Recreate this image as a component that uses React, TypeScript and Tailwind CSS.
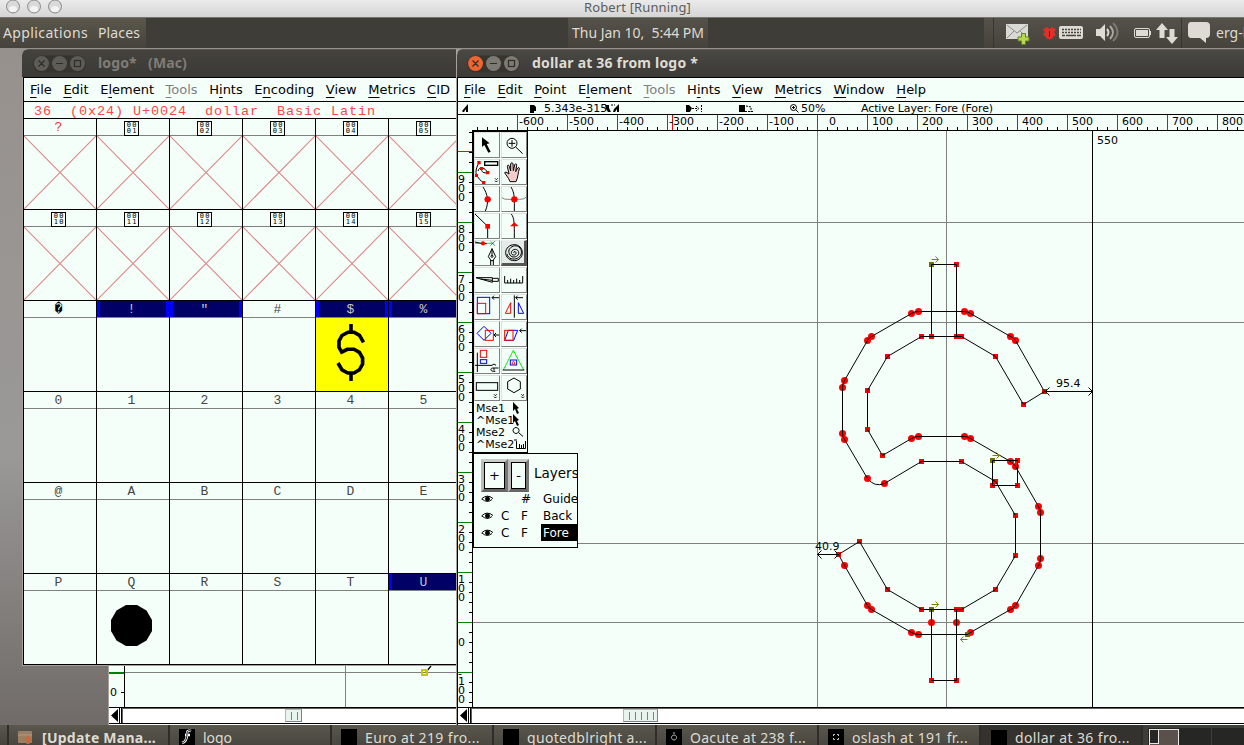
import { useLayoutEffect, useRef, type ReactNode } from "react";

/* Text whose tracking is computed so that it fills the width of its box. */
function Fit({ text, className }: { text: string; className: string }) {
  const box = useRef<HTMLSpanElement>(null);
  const inner = useRef<HTMLSpanElement>(null);
  useLayoutEffect(() => {
    if (!box.current || !inner.current) return;
    inner.current.style.letterSpacing = "0px";
    const free = box.current.clientWidth - inner.current.getBoundingClientRect().width;
    inner.current.style.letterSpacing = `${free / text.length}px`;
  }, [text]);
  return (
    <span ref={box} className={`block shrink-0 whitespace-pre ${className}`}>
      <span ref={inner}>{text}</span>
    </span>
  );
}

const UI = "font-['Noto_Sans','Open_Sans',sans-serif]";

function MenuBar({ items }: { items: [string, number][] }) {
  return (
    <div className="flex h-[25px] shrink-0 items-center gap-[11.600px] border-y border-black pb-px pl-[6px] text-[13px] text-black">
      {items.map(([t, u]) => (
        <span key={t} className={`shrink-0 leading-none ${t === "Tools" ? "text-[#808080]" : ""}`}>
          {t.slice(0, u)}
          <span className="underline decoration-1 underline-offset-[3px]">{t[u]}</span>
          {t.slice(u + 1)}
        </span>
      ))}
    </div>
  );
}

function TitleButtons({ active }: { active: boolean }) {
  return (
    <svg width="54" height="20" viewBox="0 0 54 20" className="shrink-0">
      <rect x="0" y="1.500" width="53" height="17" rx="8.500" fill="#35342f" />
      <circle cx="8.500" cy="9.500" r="7.500" fill={active ? "#ee6532" : "#5e5c57"} />
      <circle cx="26.500" cy="9.500" r="7.500" fill={active ? "#7d7a73" : "#5e5c57"} />
      <circle cx="44.500" cy="9.500" r="7.500" fill={active ? "#7d7a73" : "#5e5c57"} />
      <g stroke="#2d2c28" strokeWidth="1.200" fill="none">
        <path d="M5.500 6.500l6 6M11.500 6.500l-6 6M23 9.500h7" />
        <rect x="41.500" y="6.500" width="6" height="6" />
      </g>
    </svg>
  );
}

/* ---------- font window ---------- */

const selected = new Set(["!", '"', "$", "%", "U"]);
const rows: string[][] = [
  ["?", "0001", "0002", "0003", "0004", "0005"],
  ["0010", "0011", "0012", "0013", "0014", "0015"],
  ["\uFFFD", "!", '"', "#", "$", "%"],
  ["0", "1", "2", "3", "4", "5"],
  ["@", "A", "B", "C", "D", "E"],
  ["P", "Q", "R", "S", "T", "U"],
];

function HexBox({ code }: { code: string }) {
  return (
    <span className="mt-px grid h-[15px] w-[15px] grid-cols-2 grid-rows-2 border border-black px-px text-center font-['DejaVu_Sans_Mono',monospace] text-[7px] leading-[6px] text-black">
      {code.split("").map((c, i) => (
        <span key={i}>{c}</span>
      ))}
    </span>
  );
}

function Cell({ label, crossed }: { label: string; crossed: boolean }) {
  const sel = selected.has(label);
  return (
    <div className="flex h-[91px] w-[73px] shrink-0 flex-col border-r border-b border-black">
      <div
        className={`flex h-[17px] shrink-0 items-center justify-center border-b border-[#808080] pt-px pr-[3px] font-['Liberation_Mono',monospace] text-[13px] leading-none ${
          sel
            ? "bg-[#000066] text-[#c8c8c0] shadow-[inset_3px_0_#0000ff,inset_-3px_0_#0000ff]"
            : label === "?"
              ? "text-[#ff3030]"
              : label === "\uFFFD"
                ? "text-black"
                : "text-[#444]"
        }`}
      >
        {label.length === 4 ? <HexBox code={label} /> : label}
      </div>
      <div className={`h-[73px] ${label === "$" ? "bg-[#ffff00]" : ""}`}>
        {crossed && (
          <svg width="72" height="73" viewBox="0 0 72 73" className="block" stroke="#dc8886" strokeWidth="1.100">
            <path d="M0 0L72 73M72 0L0 73" />
          </svg>
        )}
        {label === "$" && (
          <svg width="72" height="73" viewBox="316 318 72 73" className="block" fill="none" stroke="#000" strokeWidth="3.600">
            <path d="M351 324V333M351 373V381" />
            <path d="M363.500 342.400L359.500 335.400L354 332.200H348L342 335.500L339 341V347.300L341.700 352.200L347.300 349.300H354L359.400 352.400L362.600 358V364L359.400 369.800L354 373H347.700L342 369.800L338 363" />
          </svg>
        )}
        {label === "Q" && (
          <svg width="72" height="73" viewBox="97 591 72 73" className="block">
            <path d="M126 605h11l9.500 5.500 5.500 9.500v11l-5.500 9.500-9.500 5.500h-11l-9.500-5.500-5.500-9.500v-11l5.500-9.500z" />
          </svg>
        )}
      </div>
    </div>
  );
}

function FontWindow() {
  return (
    <section className="absolute top-[1px] left-[22px] flex h-[617px] w-[435px] flex-col overflow-hidden rounded-tl-[6px] border-r border-b border-[#a8a09b] bg-[#f5fffa]">
      <header className="flex h-[28px] shrink-0 items-center border-t border-[#55534d] bg-linear-to-b from-[#44423d] to-[#3b3a36] pl-[11px]">
        <TitleButtons active={false} />
        <Fit text="logo*   (Mac)" className={`ml-[11px] w-[89px] pb-[2px] text-[14px] font-bold text-[#807d77] ${UI}`} />
      </header>
      <div className="flex grow border-l border-[#a8a09b]">
        <div className="flex w-[440px] shrink-0 flex-col border-l border-black">
          <MenuBar
            items={[["File", 0], ["Edit", 0], ["Element", 1], ["Tools", 0], ["Hints", 1], ["Encoding", 1], ["View", 0], ["Metrics", 0], ["CID", 0]]}
          />
          <div className="flex h-[17px] shrink-0 items-center border-b border-black pt-[3px] pl-[10px]">
            <Fit
              text="36  (0x24) U+0024  dollar  Basic Latin"
              className="w-[342px] font-['Liberation_Mono',monospace] text-[13.500px] leading-none text-[#ff4545]"
            />
          </div>
          <div className="flex shrink-0 flex-col">
            {rows.map((r, i) => (
              <div key={i} className="flex">
                {r.map((c) => (
                  <Cell key={c} label={c} crossed={i < 2} />
                ))}
              </div>
            ))}
          </div>
        </div>
      </div>
    </section>
  );
}

/* ---------- scroll bars ---------- */

function ScrollBar({ before, grips }: { before: string; grips: number }) {
  return (
    <div className="flex h-[17px] shrink-0 border-y border-black bg-white">
      <svg width="13" height="15" viewBox="0 0 13 15" className="shrink-0">
        <path d="M9 1v13L2 7.500z" />
        <path d="M10.500 0v15M12.500 0v15" stroke="#000" />
      </svg>
      <div className="flex grow border-t border-l border-[#606060]">
        <div className={before} />
        <div className="flex h-[13px] shrink-0 items-center gap-[5px] border border-[#b0b8b4] border-r-[#808080] border-b-[#808080] bg-[#eaf4ef] pr-[3px] pl-[5px]">
          {Array.from({ length: grips }, (_, i) => (
            <span key={i} className="h-[8px] w-px bg-[#808080]" />
          ))}
        </div>
      </div>
    </div>
  );
}

function BackWindow() {
  return (
    <section className="absolute top-[618px] left-[108px] flex h-[59px] w-[348px] flex-col overflow-hidden border-l border-[#a8a09b] bg-[#f5fffa]">
      <svg width="347" height="41" viewBox="109 666 347 41" className="shrink-0" fill="none">
        <path d="M345.500 666V707M124 672.500H456" stroke="#808080" />
        <path d="M124.500 666V707M121 692.500H124" stroke="#000" />
        <path d="M109 672.500H124" stroke="#008000" />
        <path d="M109 673.500H124" stroke="#ff0000" />
        <path d="M426 672L431 666" stroke="#000" strokeWidth="1.300" />
        <rect x="422" y="670" width="5" height="5" stroke="#c8c800" strokeWidth="2" />
        <text x="110" y="696" fill="#000" className="font-['DejaVu_Sans',sans-serif] text-[11px]">0</text>
      </svg>
      <ScrollBar before="w-[162px] shrink-0" grips={2} />
    </section>
  );
}

/* ---------- tool palette ---------- */

const chev = (x: number, y: number) => `M${x - 4} ${y}l4 4 4-4M${x - 4} ${y + 7}l4 4 4-4`;

const tools: ReactNode[] = [
  <path d="M24 16V45L31 39 43 62 50 59 38 36 47 34z" fill="#000" stroke="none" />,
  <>
    <circle cx="33" cy="34" r="15" />
    <path d="M33 24v20M23 34h20M44 45L65 65" />
  </>,
  <>
    <path d="M15 11C4 30 4 45 10 52S18 66 29 70M12 36C16 20 34 26 41 41 30 44 20 38 23 28" />
    <rect x="32" y="8" width="39" height="11" strokeWidth="4" />
    <path d={chev(67, 58)} />
    <g fill="#f00" stroke="none">
      <path d="M10 6h10v10h-10zM18 24h9v9h-9zM36 36h10v10h-10zM3 45h9v9h-9zM24 66h10v9h-10z" />
    </g>
  </>,
  <path
    d="M27 68C22 54 14 48 11 41l4-2 9 6-5-23c0-5 5-5 6 0l4 14 0-21c1-5 6-5 7 0l1 20 4-18c2-4 7-3 6 2l-3 19 6-11c3-3 6-1 5 3-4 9-3 24-10 38z"
    fill="#f4cccc"
  />,
  <>
    <path d="M27 3C42 25 45 50 34 75" />
    <circle cx="41" cy="40" r="9.500" fill="#f00" stroke="none" />
  </>,
  <>
    <path d="M2 34Q8 41 20 40H56Q70 40 75 34" stroke="#808080" />
    <path d="M30 3C42 22 40 40 40 75" />
    <circle cx="40" cy="40" r="9.500" fill="#f00" stroke="none" />
  </>,
  <>
    <path d="M3 3L41 40V76" />
    <rect x="34" y="33" width="14" height="14" fill="#f00" stroke="none" />
  </>,
  <>
    <path d="M31 3C40 15 40 30 40 75" />
    <path d="M40 28L53 40H27z" fill="#f00" stroke="none" />
  </>,
  <>
    <path d="M3 10H58" stroke="#0f0" />
    <path d="M3 6Q15 10 38 11" />
    <circle cx="27" cy="10" r="6.500" fill="#f00" stroke="none" />
    <path d="M49 3l14 14M63 3L49 17" stroke="#22f" strokeWidth="2" />
    <path d="M54 26L43 50 50 60V76M54 26L65 50 58 60V76M50 62h8M54 26v20" />
    <circle cx="54" cy="49" r="3" />
  </>,
  <>
    <path d="M39 39c-3-6 7-6 6 1s-14 7-14-2 16-15 21-4-7 18-16 17-17-16-10-25 22-13 31-2 3 26-8 31-28 2-31-13" />
    <path d="M40 14c14 0 24 11 24 24S54 62 40 62 14 52 14 38 26 14 40 14z" />
  </>,
  <path d="M6 32H55V46L6 32M20 36L55 40M55 34H73V43H55" />,
  <path d="M11 27V48H65V27M20 48V39M29 48V35M38 48V39M47 48V35M56 48V39" />,
  <>
    <rect x="10" y="10" width="37" height="49" stroke="#00f" />
    <rect x="10" y="28" width="25" height="31" stroke="#f00" />
    <path d="M77 11H54M60 5L54 11 60 17" />
  </>,
  <>
    <path d="M40 4V71M66 11H44M50 5L44 11 50 17" />
    <path d="M29 26V58H13z" stroke="#f00" />
    <path d="M52 26V58H68z" stroke="#00f" />
  </>,
  <>
    <path d="M30 16L51 37 30 58 9 37z" stroke="#00f" />
    <rect x="34" y="28" width="24" height="30" stroke="#f00" />
    <path d="M77 42H60M66 36L60 42 66 48" />
  </>,
  <>
    <path d="M22 28H50L38 58H11z" stroke="#00f" />
    <rect x="11" y="28" width="25" height="30" stroke="#f00" />
    <path d="M77 29H56M62 23L56 29 62 35" />
  </>,
  <>
    <path d="M10 14V72M3 52H54Q60 44 66 52M64 70C50 72 46 62 56 60H74M60 60V68" />
    <rect x="19" y="7" width="19" height="21" stroke="#f00" />
    <rect x="19" y="35" width="19" height="11" stroke="#00f" />
  </>,
  <>
    <path d="M37 7L68 66M37 7L7 66" stroke="#0e0" />
    <path d="M5 66H70" />
    <rect x="28" y="36" width="19" height="15" stroke="#00f" />
    <path d="M34 50V43L37 40 41 43V50" stroke="#f00" />
  </>,
  <>
    <rect x="7" y="23" width="64" height="23" />
    <path d={chev(64, 58)} />
  </>,
  <>
    <path d="M39 9L58 20V42L39 53 20 42V20z" />
    <path d={chev(65, 58)} />
  </>,
];

const mouse: [string, ReactNode][] = [
  ["Mse1", <path d="M1 0V9L3 7 5 12 7 11 5 7 7 6z" fill="#000" stroke="none" />],
  ["^Mse1", <path d="M1 0V9L3 7 5 12 7 11 5 7 7 6z" fill="#000" stroke="none" />],
  ["Mse2", <path d="M4 1.500a3 3 0 1 0 .1 0M6.500 6.500L11 10.500" />],
  ["^Mse2", <path d="M2 2h3M4.500 3V10.500H13.500V3M7.500 10V6M9.500 10V7M11.500 10V6" />],
];

function Palette() {
  return (
    <div className="absolute top-0 left-0 flex h-[323px] w-[55px] flex-col border-t-2 border-r border-b border-l border-black bg-[#f5fffa] text-black">
      <div className="grid grid-cols-2 gap-px">
        {tools.map((t, i) => (
          <svg
            key={i}
            width="26"
            height="26"
            viewBox={i === 9 ? "3 3 66 66" : "3 3 72 72"}
            fill="none"
            stroke="#000"
            strokeWidth="3"
            className={
              i === 9
                ? "border-t border-r-3 border-b-3 border-l border-t-[#eee] border-r-[#555] border-b-[#555] border-l-[#ccc] bg-[#e4ebe8]"
                : "border border-t-[#e0e0e0] border-r-[#808080] border-b-[#808080] border-l-[#e0e0e0]"
            }
          >
            {t}
          </svg>
        ))}
      </div>
      <div className="flex flex-col pt-px pl-[2px]">
        {mouse.map(([t, icon]) => (
          <div key={t} className="flex h-[12px] items-center">
            <span className="w-[36px] shrink-0 text-[11px] leading-none whitespace-nowrap">{t}</span>
            <svg width="14" height="12" viewBox="0 0 14 12" fill="none" stroke="#000" className="shrink-0">
              {icon}
            </svg>
          </div>
        ))}
      </div>
    </div>
  );
}

function Eye() {
  return (
    <svg width="13" height="9" viewBox="0 0 13 9" className="shrink-0" fill="none" stroke="#000">
      <path d="M.5 5Q6 -.5 12 4.500M1 5Q6 9.500 11 5.500" />
      <circle cx="6.500" cy="4.800" r="2" fill="#000" />
    </svg>
  );
}

const KEY =
  "flex h-[33px] shrink-0 items-center justify-center border-4 border-t-[#ccc] border-r-[#777] border-b-[#666] border-l-[#bbb] text-[13px] outline-1 -outline-offset-4 outline-black";

function Layers() {
  return (
    <div className="absolute top-[323px] left-0 flex h-[95px] w-[105px] flex-col overflow-hidden border border-black bg-[#f5fffa] text-black">
      <div className="flex h-[36px] shrink-0 items-start pt-[5px] pl-[7px]">
        <div className={`w-[27px] ${KEY}`}>+</div>
        <div className={`w-[21px] ${KEY}`}>-</div>
        <span className="ml-[5px] pt-[8px] text-[13.500px] leading-none">Layers</span>
      </div>
      {[
        ["", "#", "Guide"],
        ["C", "F", "Back"],
        ["C", "F", "Fore"],
      ].map(([c, f, n]) => (
        <div key={n} className="flex h-[17px] shrink-0 items-center pl-[7px] text-[12px] leading-none">
          <Eye />
          <span className="ml-[7px] w-[20px] shrink-0">{c}</span>
          <span className="w-[20px] shrink-0">{f}</span>
          <span className={`flex h-[17px] w-[40px] shrink-0 items-center pl-[2px] ${n === "Fore" ? "bg-black text-white" : ""}`}>{n}</span>
        </div>
      ))}
    </div>
  );
}

/* ---------- glyph canvas ---------- */

const squares: [number, number][] = [
  [956, 264], [1044, 391], [1023, 404], [995, 356], [961, 336], [956, 336], [931, 336], [921, 336], [887, 356], [867, 390],
  [867, 429], [882, 455], [838, 554], [859, 541], [887, 589], [921, 609], [956, 609], [961, 609], [995, 589], [1015, 555],
  [1015, 515], [995, 481], [961, 461], [921, 461], [956, 680], [931, 680], [1017, 460], [1017, 485], [992, 485],
];
const dots: [number, number][] = [
  [911, 313], [918, 311], [964, 311], [970, 313], [1010, 336], [1015, 340], [911, 438], [918, 436], [964, 436], [970, 438],
  [1010, 461], [1015, 466], [1038, 506], [1040, 512], [1040, 558], [1038, 565], [1015, 605], [1010, 609], [970, 632],
  [918, 634], [911, 632], [871, 609], [867, 605], [844, 565], [884, 483], [867, 478], [844, 439], [842, 433], [842, 387],
  [844, 380], [867, 340], [871, 336], [931, 622], [956, 622],
];
const starts: [number, number][] = [[931, 264], [931, 609], [992, 460], [967, 634]];

function Canvas() {
  return (
    <svg width="771" height="576" viewBox="473 131 771 576" className="block" fill="none">
      <path d="M473 222.500H1244M473 322.500H1244M473 543.500H1244M473 622.500H1244M817.500 131V707M946.500 131V707" stroke="#808080" />
      <path d="M1092.500 131V707" stroke="#000" />
      <g transform="translate(.5 .5)">
        {dots.map(([x, y], i) => (
          <circle key={i} cx={x} cy={y} r="3.500" fill="#f00" />
        ))}
        {squares.map(([x, y], i) => (
          <rect key={i} x={x - 2.5} y={y - 2.5} width="5" height="5" fill="#f00" />
        ))}
        {starts.map(([x, y], i) => (
          <rect key={i} x={x - 2.5} y={y - 2.5} width="5" height="5" fill="#707000" />
        ))}
        <path
          stroke="#000"
          d="M911 313Q914 311 918 311H964Q967 311 970 313L1010 336Q1013 337 1015 340L1044 391 1023 404 995 356 961 336H921L887 356 867 390V429L882 455 911 438Q914 436 918 436H964Q967 436 970 438L1010 461Q1013 463 1015 466L1038 506Q1040 509 1040 512V558Q1040 562 1038 565L1015 605Q1013 608 1010 609L970 632 967 634H918Q914 634 911 632L871 609Q869 608 867 605L844 565 838 554 859 541 887 589 921 609H961L995 589 1015 555V515L995 481 961 461H921L884 483Q874 487 867 478L844 439Q842 436 842 433V387Q842 383 844 380L867 340Q869 337 871 336z"
        />
        <path stroke="#000" d="M931 264H956V336H931zM931 609H956V680H931zM992 460H1017V485H992z" />
        <path stroke="#808000" d="M931 259H938M935 256l3 3-3 3M992 455H999M996 452l3 3-3 3M931 604H938M935 601l3 3-3 3M967 639H960M963 636l-3 3 3 3" />
        <path stroke="#000" d="M1044 391H1092M1049 387l-4 4 4 4M1088 387l4 4-4 4M817 554H838M821 550l-4 4 4 4M834 550l4 4-4 4" />
      </g>
      <g fill="#000" className="font-['DejaVu_Sans',sans-serif] text-[11px]">
        <text x="1097" y="144">550</text>
        <text x="1056" y="387">95.4</text>
        <text x="815" y="550">40.9</text>
      </g>
    </svg>
  );
}

const range = (a: number, b: number, s: number) => Array.from({ length: Math.floor((b - a) / s) + 1 }, (_, i) => a + i * s);

function TopRuler() {
  return (
    <svg width="786" height="16" viewBox="458 115 786 16" className="block shrink-0" fill="none">
      <path stroke="#000" d={range(477, 1240, 10).map((x) => `M${x + 0.5} 127V130`).join("") + "M472 130.500H1244"} />
      <path stroke="#008000" d={range(517, 1240, 50).map((x) => `M${x + 0.5} 115V130`).join("")} />
      <path stroke="#f00" d="M672.500 115V130" />
      <g fill="#000" className="font-['DejaVu_Sans',sans-serif] text-[11px]">
        {range(-600, 800, 100).map((v) => (
          <text key={v} x={817 + v / 2 + (v < 0 ? 2 : v === 0 ? 12 : 5)} y="125">{v}</text>
        ))}
      </g>
    </svg>
  );
}

function SideRuler() {
  return (
    <svg width="15" height="576" viewBox="458 131 15 576" className="block shrink-0" fill="none">
      <path stroke="#000" d={range(132, 702, 10).map((y) => `M469 ${y + 0.5}H472`).join("") + "M472.500 131V707"} />
      <path stroke="#008000" d={range(172, 672, 50).map((y) => `M458 ${y + 0.5}H472`).join("")} />
      <path stroke="#f00" d="M458 151.500H472" />
      <g fill="#000" className="font-['DejaVu_Sans',sans-serif] text-[11px]">
        {range(100, 900, 100).map((v) =>
          String(v).split("").map((c, i) => (
            <text key={`${v}${i}`} x="458" y={622 - v / 2 + 11 + i * 9}>{c}</text>
          )),
        )}
        <text x="458" y="646">0</text>
        <text x="458" y="677">-</text>
        <text x="458" y="685">1</text>
        <text x="458" y="694">0</text>
        <text x="458" y="703">0</text>
      </g>
    </svg>
  );
}

function InfoBar() {
  return (
    <div className="flex h-[13px] shrink-0 items-center border-b border-black text-[11px] leading-none whitespace-nowrap text-black">
      <svg width="86" height="12" viewBox="458 102 86 12" className="shrink-0">
        <path d="M468 104v8h-2v-3l-2 3h-1l-1-1zM530 105h4l2 2v4h-2v2h-4z" />
      </svg>
      <span className="w-[60px] shrink-0">5.343e-315</span>
      <svg width="196" height="12" viewBox="604 102 196 12" className="shrink-0" fill="none" stroke="#000">
        <path d="M605 105h4v3l2 4h-3l-2-3zM619 104v8h-2v-3l-2 3h-2l1-3zM686 105h3l3 3-2 4h-4zM739 105h6v7h-6z" fill="#000" stroke="none" />
        <path d="M611 105l4 0M692 108.500h6M696 106l3 2.500-3 2.500M701.500 105v7M746 106l5 1v5M745 111.500h8" strokeDasharray="2 1" />
        <circle cx="793.500" cy="107.500" r="3" />
        <path d="M792 107.500h3M793.500 106v3M796 110l2.500 2.500" />
      </svg>
      <span className="w-[61px] shrink-0 pl-px">50%</span>
      <Fit text="Active Layer: Fore (Fore)" className="w-[132px]" />
    </div>
  );
}

function GlyphWindow() {
  return (
    <section className="absolute top-[1px] left-[456px] flex h-[676px] w-[788px] flex-col overflow-hidden rounded-tl-[6px] border-l border-[#a8a09b] bg-[#f5fffa]">
      <header className="flex h-[28px] shrink-0 items-center border-t border-[#5b5952] bg-linear-to-b from-[#4a4843] to-[#3b3a36] pl-[10px]">
        <TitleButtons active />
        <Fit text="dollar at 36 from logo *" className={`ml-[11px] w-[166px] pb-[2px] text-[14px] font-bold text-[#dfdbd2] ${UI}`} />
      </header>
      <div className="flex grow flex-col border-l border-black">
        <MenuBar
          items={[["File", 0], ["Edit", 0], ["Point", 0], ["Element", 1], ["Tools", 0], ["Hints", 1], ["View", 0], ["Metrics", 0], ["Window", 0], ["Help", 0]]}
        />
        <InfoBar />
        <TopRuler />
        <div className="flex">
          <SideRuler />
          <div className="relative">
            <Canvas />
            <div className="absolute -top-px left-0">
              <Palette />
              <Layers />
            </div>
          </div>
        </div>
        <ScrollBar before="w-[151px] shrink-0" grips={5} />
      </div>
    </section>
  );
}

/* ---------- desktop bars ---------- */

function HostTitle() {
  return (
    <div className="flex h-[18px] shrink-0 items-start border-b border-[#77756f] bg-linear-to-b from-[#ebebeb] to-[#d5d5d5]">
      <svg width="584" height="17" viewBox="0 0 584 17" className="shrink-0">
        {[13, 34, 55].map((x) => (
          <g key={x}>
            <circle cx={x} cy="6.500" r="6.500" fill="#d9d9d9" stroke="#8b8b8b" />
            <ellipse cx={x} cy="9" rx="4" ry="3" fill="#f4f4f4" />
          </g>
        ))}
      </svg>
      <Fit text="Robert [Running]" className={`w-[107px] text-[13px] leading-[15px] text-[#5c5c5c] ${UI}`} />
    </div>
  );
}

function TopPanel() {
  return (
    <div className={`flex h-[30px] shrink-0 items-center bg-[#3f3d37] text-[14px] text-[#dfdbd2] ${UI}`}>
      <div className="flex h-full w-[146px] shrink-0 items-center bg-linear-to-b from-[#5b574c] to-[#45433c] pb-[2px] pl-[3px]">
        <Fit text="Applications" className="w-[85px]" />
        <Fit text="Places" className="ml-[10px] w-[42px]" />
      </div>
      <div className="ml-[422px] flex h-full w-[140px] shrink-0 items-center bg-linear-to-b from-[#55524a] to-[#45433c] pb-[2px] pl-[4px]">
        <Fit text="Thu Jan 10,  5:44 PM" className="w-[132px]" />
      </div>
      <div className="ml-[276px] flex h-full w-[260px] shrink-0 items-center overflow-hidden bg-linear-to-b from-[#55524a] to-[#45433c]">
        <svg width="232" height="30" viewBox="984 18 232 30" className="shrink-0" fill="none">
          <path d="M993.500 18V48M1181.500 18V48" stroke="#38362f" />
          <rect x="1006" y="24" width="22" height="15" fill="#d9d9d6" />
          <path d="M1007 25l10 8 10-8M1007 38l7-7M1027 38l-7-7" stroke="#8c8c8a" />
          <path d="M1021.500 33.500h4v3.500h3.500v4h-3.500v3.500h-4v-3.500h-3.500v-4h3.500z" fill="#b5d84c" stroke="#5c8420" />
          <path d="M1043 29.500l4-2.500 2.500 2 2.500-2 4 2.500-2 2.500 2 3-3 1.500v1.500l-3.500 1.500-3.500-1.500v-1.500l-3-1.500 2-3z" fill="#e03028" />
          <path d="M1049.500 31v6" stroke="#5b201c" />
          <rect x="1059" y="26" width="24" height="13" rx="2" fill="#dfdbd2" />
          <path d="M1062 29.500h19M1062 32.500h19" stroke="#45433c" strokeWidth="1.500" strokeDasharray="2 1" />
          <path d="M1062 35.500h3M1066 35.500h10M1077 35.500h4" stroke="#45433c" strokeWidth="1.500" />
          <path d="M1096 29h4l5-5v17l-5-5h-4z" fill="#dfdbd2" />
          <path d="M1107 29q3 3.500 0 7" stroke="#dfdbd2" strokeWidth="2" />
          <path d="M1110 26q6 6.500 0 13" stroke="#aaa79e" strokeWidth="2" />
          <path d="M1113 23q9 9.500 0 18" stroke="#7d7a72" strokeWidth="2" />
          <rect x="1134.500" y="28.500" width="15" height="9" rx="1.500" stroke="#dfdbd2" />
          <rect x="1136" y="30" width="12" height="6" fill="#dfdbd2" />
          <path d="M1150.500 31v4" stroke="#dfdbd2" />
          <path d="M1162 23l6 7h-3.500v8h-5v-8H1156zM1172 44l-6-7h3.500v-8h5v8H1178z" fill="#dfdbd2" />
          <path d="M1191 22h15q4 0 4 4v8q0 4-4 4v5l-6-5h-9q-3 0-3-4v-8q0-4 3-4z" fill="#dfdbd2" />
        </svg>
        <span className="shrink-0 pb-[2px]">erg-l</span>
      </div>
    </div>
  );
}

const tasks: { label: string; width: string; text: string; icon: ReactNode; active?: boolean }[] = [
  {
    label: "[Update Mana...", width: "w-[161px]", text: "w-[114px] font-bold",
    icon: (
      <>
        <rect x="0" y="2" width="14" height="12" rx="1" fill="#9b7f65" />
        <path d="M0 6h14" stroke="#b59a80" />
        <path d="M10 6l4 5h-2.500v4h-3v-4H6z" fill="#c9683c" />
      </>
    ),
  },
  {
    label: "logo", width: "w-[162px]", text: "w-[29px]",
    icon: (
      <>
        <rect width="16" height="16" fill="#000" />
        <path d="M12 2c-3-1-4 0-4 3S7 13 3 14M6 6h5" stroke="#fff" strokeWidth="2.500" fill="none" />
        <path d="M12 2c-3-1-4 0-4 3S7 13 3 14" stroke="#000" fill="none" />
      </>
    ),
  },
  { label: "Euro at 219 fro...", width: "w-[162px]", text: "w-[115px]", icon: <rect width="16" height="16" /> },
  { label: "quotedblright a...", width: "w-[163px]", text: "w-[120px]", icon: <rect width="16" height="16" /> },
  {
    label: "Oacute at 238 f...", width: "w-[162px]", text: "w-[116px]",
    icon: (
      <>
        <rect width="16" height="16" />
        <path d="M8 6a2.500 2.500 0 1 0 .1 0M8 5V3" stroke="#bbb" fill="none" />
      </>
    ),
  },
  {
    label: "oslash at 191 fr...", width: "w-[162px]", text: "w-[116px]",
    icon: (
      <>
        <rect width="16" height="16" />
        <path d="M5.500 7V5.500H7M9 5.500h1.500V7M10.500 9v1.500H9M7 10.500H5.500V9" stroke="#ccc" fill="none" />
      </>
    ),
  },
  { label: "dollar at 36 fro...", width: "w-[162px]", text: "w-[115px]", icon: <rect width="16" height="16" />, active: true },
];

function TaskBar() {
  return (
    <div className={`flex h-[20px] shrink-0 overflow-hidden bg-[#3f3d37] text-[14px] text-[#dfdbd2] ${UI}`}>
      <div className="w-[9px] shrink-0 border-r-2 border-[#2e2d29] bg-linear-to-b from-[#5a574d] to-[#45433c]" />
      {tasks.map((t) => (
        <div
          key={t.label}
          className={`flex h-[24px] shrink-0 items-center border-r-2 border-[#2e2d29] ${t.width} ${
            t.active ? "bg-[#33322e] pt-px pl-[10px]" : "bg-linear-to-b from-[#5a574d] to-[#45433c] pl-[9px]"
          }`}
        >
          <svg width="16" height="16" viewBox="0 0 16 16" className="shrink-0">{t.icon}</svg>
          <Fit text={t.label} className={`ml-[8px] ${t.text}`} />
        </div>
      ))}
      <svg width="101" height="20" viewBox="1143 725 101 20" className="shrink-0" fill="none">
        <rect x="1143" y="725" width="101" height="20" fill="#3f3d37" />
        <rect x="1148" y="728" width="96" height="17" fill="#262624" />
        <rect x="1149.500" y="729.500" width="29" height="20" fill="#5a504c" stroke="#e8e8e8" />
        <rect x="1149.500" y="729.500" width="9" height="14" fill="#262624" stroke="#e8e8e8" />
        <path d="M1211.500 728V745" stroke="#3f3d37" />
      </svg>
    </div>
  );
}

export default function App() {
  return (
    <div className="flex h-[745px] w-[1244px] flex-col overflow-hidden bg-[#3f3d37] font-['DejaVu_Sans',sans-serif]">
      <HostTitle />
      <TopPanel />
      <main className="relative h-[677px] shrink-0 bg-linear-to-b from-[#97918d] via-[#9a9998] via-60% to-[#706b68]">
        <BackWindow />
        <FontWindow />
        <GlyphWindow />
      </main>
      <TaskBar />
    </div>
  );
}
